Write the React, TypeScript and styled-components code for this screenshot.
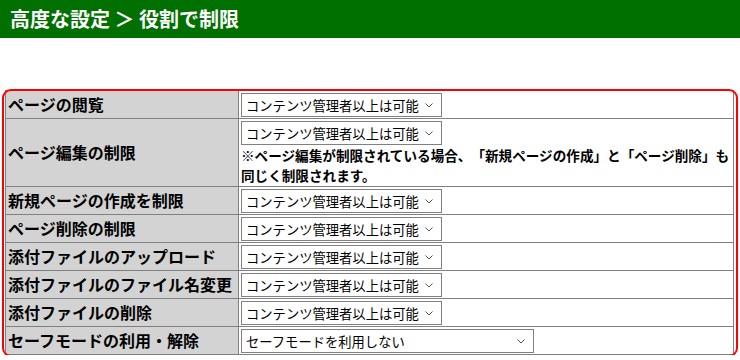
import React from "react";
import styled, { createGlobalStyle } from "styled-components";

const Global = createGlobalStyle`
  html, body { margin: 0; padding: 0; background: #fff; }
  body {
    font-family: "Noto Sans CJK JP", "Noto Sans", sans-serif;
    color: #000;
    text-spacing-trim: space-all;
  }
`;

const Header = styled.h1`
  margin: 0;
  height: 38px;
  background: #007000;
  color: #fff;
  font-size: 20px;
  font-weight: 700;
  line-height: 38px;
  padding-left: 10px;
`;

const Wrap = styled.div`
  position: relative;
  margin: 52px 0 0 5px;
  width: 729px;
`;

const Highlight = styled.div`
  position: absolute;
  left: -3px;
  top: -1px;
  right: -4px;
  bottom: -2px;
  border: 2.5px solid #ff0000;
  border-radius: 9px;
  pointer-events: none;
`;

const Table = styled.table`
  width: 729px;
  border-collapse: collapse;
  table-layout: fixed;
`;

const LabelCell = styled.th`
  width: 229px;
  background: #d3d3d3;
  border: 1px solid #808080;
  padding: 0 1px 1px 2px;
  text-align: left;
  vertical-align: middle;
  font-size: 16px;
  line-height: 20px;
  font-weight: 700;
  white-space: nowrap;
`;

const ValueCell = styled.td`
  border: 1px solid #808080;
  padding: 2px 2px 1px 2px;
  vertical-align: top;
  height: 24px;
`;

const SelectBox = styled.div<{ $w: number }>`
  position: relative;
  box-sizing: border-box;
  width: ${(p) => p.$w}px;
  height: 24px;
  border: 1px solid #808080;
  background: #fff;
  display: flex;
  align-items: center;
  padding-left: 4px;
  font-size: 13.3px;
  white-space: nowrap;
`;

const Chevron = styled.svg`
  position: absolute;
  right: 8px;
  top: 9px;
`;

const Note = styled.div`
  font-size: 13.6px;
  font-weight: 700;
  line-height: 20px;
  padding: 0;
  white-space: nowrap;
`;

const Select = ({ label, w = 201 }: { label: string; w?: number }) => (
  <SelectBox $w={w}>
    {label}
    <Chevron width="8" height="5" viewBox="0 0 8 5">
      <path d="M0.5 0.5 L4 4 L7.5 0.5" fill="none" stroke="#555" strokeWidth="1" />
    </Chevron>
  </SelectBox>
);

const PERM = "コンテンツ管理者以上は可能";

const rows = [
  "新規ページの作成を制限",
  "ページ削除の制限",
  "添付ファイルのアップロード",
  "添付ファイルのファイル名変更",
  "添付ファイルの削除",
];

export default function App() {
  return (
    <>
      <Global />
      <Header>高度な設定 ＞ 役割で制限</Header>
      <Wrap>
        <Table>
          <tbody>
            <tr>
              <LabelCell>ページの閲覧</LabelCell>
              <ValueCell>
                <Select label={PERM} />
              </ValueCell>
            </tr>
            <tr>
              <LabelCell>ページ編集の制限</LabelCell>
              <ValueCell>
                <Select label={PERM} />
                <Note>
                  ※ページ編集が制限されている場合、「新規ページの作成」と「ページ削除」も
                  <br />
                  同じく制限されます。
                </Note>
              </ValueCell>
            </tr>
            {rows.map((r) => (
              <tr key={r}>
                <LabelCell>{r}</LabelCell>
                <ValueCell>
                  <Select label={PERM} />
                </ValueCell>
              </tr>
            ))}
            <tr>
              <LabelCell>セーフモードの利用・解除</LabelCell>
              <ValueCell>
                <Select label="セーフモードを利用しない" w={293} />
              </ValueCell>
            </tr>
          </tbody>
        </Table>
        <Highlight />
      </Wrap>
    </>
  );
}
